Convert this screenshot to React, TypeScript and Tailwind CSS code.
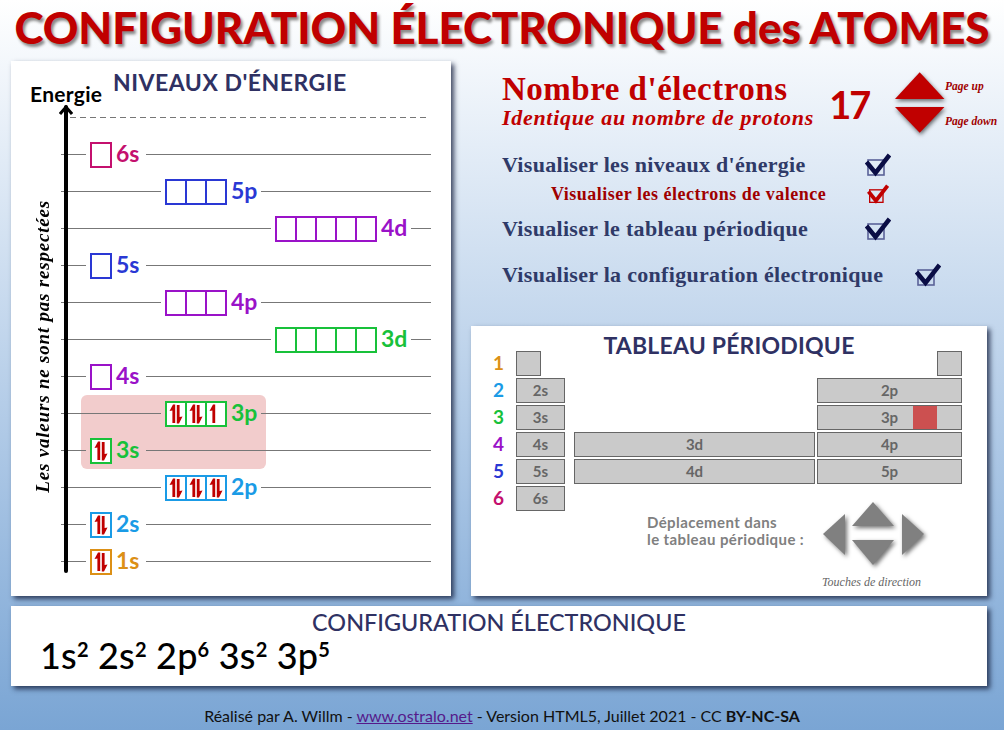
import React from 'react';

const orbitalColors: Record<string, string> = {
  orange: 'border-[#dc9016] text-[#dc9016]',
  sky: 'border-[#1a9be6] text-[#1a9be6]',
  green: 'border-[#18c13a] text-[#18c13a]',
  purple: 'border-[#9a12c8] text-[#9a12c8]',
  blue: 'border-[#2a38d4] text-[#2a38d4]',
  pink: 'border-[#c4106e] text-[#c4106e]',
};

type Row = { label: string; color: string; block: 's' | 'p' | 'd'; electrons?: number[] };

const rows: Row[] = [
  { label: '6s', color: 'pink', block: 's' },
  { label: '5p', color: 'blue', block: 'p' },
  { label: '4d', color: 'purple', block: 'd' },
  { label: '5s', color: 'blue', block: 's' },
  { label: '4p', color: 'purple', block: 'p' },
  { label: '3d', color: 'green', block: 'd' },
  { label: '4s', color: 'purple', block: 's' },
  { label: '3p', color: 'green', block: 'p', electrons: [2, 2, 1] },
  { label: '3s', color: 'green', block: 's', electrons: [2] },
  { label: '2p', color: 'sky', block: 'p', electrons: [2, 2, 2] },
  { label: '2s', color: 'sky', block: 's', electrons: [2] },
  { label: '1s', color: 'orange', block: 's', electrons: [2] },
];

const cellCount = { s: 1, p: 3, d: 5 };
const leadWidth = { s: 'w-[25px]', p: 'w-[100px]', d: 'w-[210px]' };

const Electrons = ({ count }: { count: number }) => (
  <svg width="18" height="22" viewBox="0 0 18 22" className="block">
    <path d="M2.5 8 L6 1.5 H8.2 V20 H5.4 V7.5 Z" fill="#c00000" />
    {count > 1 && <path d="M15.5 13.5 L12 20.5 H9.8 V2 H12.6 V14 Z" fill="#c00000" />}
  </svg>
);

const Orbital = ({ row }: { row: Row }) => (
  <div className="flex items-center h-[37px]">
    <div className={`${leadWidth[row.block]} h-px bg-[#777777]`} />
    <div className={`flex ml-1 h-[26px] bg-white ${orbitalColors[row.color]}`}>
      {Array.from({ length: cellCount[row.block] }).map((_, i) => (
        <div key={i} className={`w-[22px] h-[26px] border-2 flex items-center justify-center ${i > 0 ? '-ml-[2px]' : ''}`}>
          {row.electrons && row.electrons[i] ? <Electrons count={row.electrons[i]} /> : null}
        </div>
      ))}
    </div>
    <div className={`w-[34px] pl-[4px] pb-[2px] text-[23px] font-bold leading-none whitespace-nowrap ${orbitalColors[row.color]}`}>
      {row.label}
    </div>
    <div className="flex-1 h-px bg-[#777777]" />
  </div>
);

const ToggleBox = ({ dark = true, small = false }: { dark?: boolean; small?: boolean }) => {
  const stroke = dark ? '#0a0d45' : '#c00000';
  const box = dark ? '#5a6298' : '#c00000';
  return (
    <svg width={small ? 22 : 26} height={small ? 20 : 24} viewBox="0 0 26 24" className="block">
      <rect x="3" y="7" width="16" height="15" fill="none" stroke={box} strokeWidth="1.6" />
      <path d="M1.5 9 L10.5 20 L24.5 2" fill="none" stroke={stroke} strokeWidth="4.5" />
    </svg>
  );
};

const periodLabels = ['1', '2', '3', '4', '5', '6'];
const periodColors = ['text-[#dc9016]', 'text-[#1a9be6]', 'text-[#18c13a]', 'text-[#9a12c8]', 'text-[#2a38d4]', 'text-[#c4106e]'];

const Cell = ({ label, width, mark = false }: { label?: string; width: string; mark?: boolean }) => (
  <div className={`relative ${width} h-[25px] border border-[#666666] bg-[#cacaca] text-[#666666] text-[15px] font-bold flex items-center justify-center`}>
    {mark && <div className="absolute top-0 bottom-0 left-[95px] w-[24px] bg-[#cc5050]" />}
    <span className="relative">{label}</span>
  </div>
);

const Sup = ({ children }: { children: React.ReactNode }) => (
  <sup className="text-[20px] leading-none font-bold top-[-12px]">{children}</sup>
);

export default function App() {
  return (
    <div className="w-[1004px] h-[730px] overflow-hidden bg-gradient-to-b from-white to-[#7aa5d4] font-['Lato',sans-serif]">
      <h1 className="h-[61px] pt-[1px] text-center text-[44px] tracking-[-0.1px] leading-[52px] font-black text-[#c00000] whitespace-nowrap [text-shadow:2px_3px_3px_#888888]">
        CONFIGURATION ÉLECTRONIQUE des ATOMES
      </h1>

      <div className="flex gap-[20px] pl-[11px] h-[535px]">
        {/* niveaux d'énergie */}
        <section className="relative w-[440px] bg-white shadow-[3px_3px_5px_rgba(20,30,60,0.8)] flex flex-col">
          <div className="h-[56px] relative">
            <div className="absolute left-[19px] top-[17px] text-[21px] tracking-[0.3px] font-bold text-black">Energie</div>
            <h2 className="absolute left-[102px] top-[4px] text-[23px] font-bold text-[#2f3163] tracking-[0.5px]">NIVEAUX D'ÉNERGIE</h2>
          </div>
          <div className="ml-[59px] mr-[24px] h-px bg-[repeating-linear-gradient(90deg,#777777_0_6px,transparent_6px_10px)]" />
          <div className="flex flex-1 pt-[18px]">
            <div className="w-[50px] pl-[14px] flex justify-center items-center pb-[40px]">
              <span className="[writing-mode:vertical-rl] rotate-180 text-[19px] tracking-[0.8px] italic font-bold text-black whitespace-nowrap font-['Liberation_Serif',serif]">
                Les valeurs ne sont pas respectées
              </span>
            </div>
            <div className="relative w-[370px]">
              <div className="absolute left-[20px] top-[259px] w-[185px] h-[74px] rounded-[6px] bg-[#f2cccc]" />
              <div className="relative">
                {rows.map((row) => (
                  <Orbital key={row.label} row={row} />
                ))}
              </div>
            </div>
          </div>
          <svg width="14" height="472" viewBox="0 0 14 472" className="absolute left-[48px] top-[42px]">
            <path d="M7 4 V468" stroke="#000000" strokeWidth="4" strokeLinecap="round" />
            <path d="M1 11 L7 4 L13 11" fill="none" stroke="#000000" strokeWidth="3" />
          </svg>
        </section>

        <div className="w-[516px] flex flex-col">
          {/* commandes */}
          <div className="h-[265px] font-['Liberation_Serif',serif] font-bold">
            <div className="flex pl-[31px] pt-[11px] h-[80px]">
              <div className="w-[331px] text-[#c00000] whitespace-nowrap">
                <div className="text-[33px] leading-[34px] tracking-[0.5px]">Nombre d'électrons</div>
                <div className="text-[22px] leading-[24px] tracking-[0.7px] italic">Identique au nombre de protons</div>
              </div>
              <div className="w-[65px] pt-[12px] text-[38px] tracking-[-2px] leading-[40px] text-[#c00000] font-['Lato',sans-serif]">17</div>
              <svg width="52" height="64" viewBox="0 0 52 64" className="-mt-[1px] drop-shadow-[1px_2px_2px_rgba(0,0,0,0.6)]">
                <polygon points="26,1 51,28 1,28" fill="#c00000" />
                <polygon points="1,36 51,36 26,62" fill="#c00000" />
              </svg>
              <div className="w-[42px] text-[11.5px] italic text-[#a00000] flex flex-col justify-between h-[52px] mt-[6px] whitespace-nowrap">
                <span>Page up</span>
                <span>Page down</span>
              </div>
            </div>
            <div className="pl-[31px] pt-[7px] text-[#2f3a68] text-[22px] tracking-[0.3px] leading-[26px]">
              <div className="flex items-center h-[34px] w-[389px] justify-between whitespace-nowrap">
                <span>Visualiser les niveaux d'énergie</span>
                <ToggleBox />
              </div>
              <div className="flex items-center h-[24px] w-[387px] justify-between pl-[49px] text-[18px] tracking-[0.5px] text-[#a00000] whitespace-nowrap">
                <span>Visualiser les électrons de valence</span>
                <ToggleBox dark={false} small />
              </div>
              <div className="flex items-center h-[46px] w-[389px] justify-between whitespace-nowrap">
                <span>Visualiser le tableau périodique</span>
                <ToggleBox />
              </div>
              <div className="flex items-center h-[46px] w-[439px] justify-between whitespace-nowrap">
                <span>Visualiser la configuration électronique</span>
                <ToggleBox />
              </div>
            </div>
          </div>

          {/* tableau périodique */}
          <section className="relative flex-1 bg-white shadow-[3px_3px_5px_rgba(20,30,60,0.8)]">
            <h2 className="h-[25px] pt-[4px] text-center text-[23px] tracking-[0.2px] leading-[30px] font-bold text-[#2f3163]">TABLEAU PÉRIODIQUE</h2>
            <div className="flex flex-col gap-[2px]">
              {periodLabels.map((p, i) => {
                const n = i + 1;
                return (
                  <div key={p} className="flex items-center h-[25px]">
                    <div className={`w-[45px] pr-[12px] text-right text-[19px] font-bold ${periodColors[i]}`}>{p}</div>
                    {n === 1 ? (
                      <div className="flex justify-between w-[446px]">
                        <Cell width="w-[25px]" />
                        <Cell width="w-[25px]" />
                      </div>
                    ) : (
                      <>
                        <Cell label={`${n}s`} width="w-[49px]" />
                        {n >= 4 && n <= 5 && <div className="ml-[9px] mr-[2px]"><Cell label={`${n - 1}d`} width="w-[241px]" /></div>}
                        {n <= 3 && <div className="w-[252px]" />}
                        {n <= 5 && <Cell label={`${n}p`} width="w-[145px]" mark={n === 3} />}
                      </>
                    )}
                  </div>
                );
              })}
            </div>
            <div className="flex mt-[-10px] pl-[176px]">
              <div className="w-[175px] pt-[13px] text-[15px] leading-[17px] font-bold text-[#808080] tracking-[0.4px] whitespace-nowrap">
                Déplacement dans
                <br />
                le tableau périodique :
              </div>
              <div>
                <svg width="104" height="66" viewBox="0 0 104 66" className="drop-shadow-[2px_2px_2px_rgba(0,0,0,0.55)]">
                  <polygon points="1,33 23,13 23,54" fill="#808080" />
                  <polygon points="51,1 72,25 30,25" fill="#808080" />
                  <polygon points="30,39 72,39 51,64" fill="#808080" />
                  <polygon points="80,13 102,33 80,54" fill="#808080" />
                </svg>
                <div className="mt-[6px] text-[12px] italic text-[#666666] whitespace-nowrap font-['Liberation_Serif',serif]">Touches de direction</div>
              </div>
            </div>
          </section>
        </div>
      </div>

      {/* configuration électronique */}
      <section className="mt-[10px] ml-[11px] w-[976px] h-[80px] bg-white shadow-[3px_3px_5px_rgba(20,30,60,0.8)] px-[29px]">
        <h2 className="pt-[3px] text-center text-[23.4px] leading-[26px] font-medium text-[#2f3163]">CONFIGURATION ÉLECTRONIQUE</h2>
        <p className="mt-[2px] text-[36px] leading-[36px] tracking-[0.2px] font-medium text-black">
          1s<Sup>2</Sup> 2s<Sup>2</Sup> 2p<Sup>6</Sup> 3s<Sup>2</Sup> 3p<Sup>5</Sup>
        </p>
      </section>

      <footer className="mt-[21px] text-center text-[16px] leading-[18px] text-[#111111]">
        Réalisé par A. Willm - <a className="underline text-[#551a8b]" href="#">www.ostralo.net</a> - Version HTML5, Juillet 2021 - CC <span className="font-bold">BY-NC-SA</span>
      </footer>
    </div>
  );
}
